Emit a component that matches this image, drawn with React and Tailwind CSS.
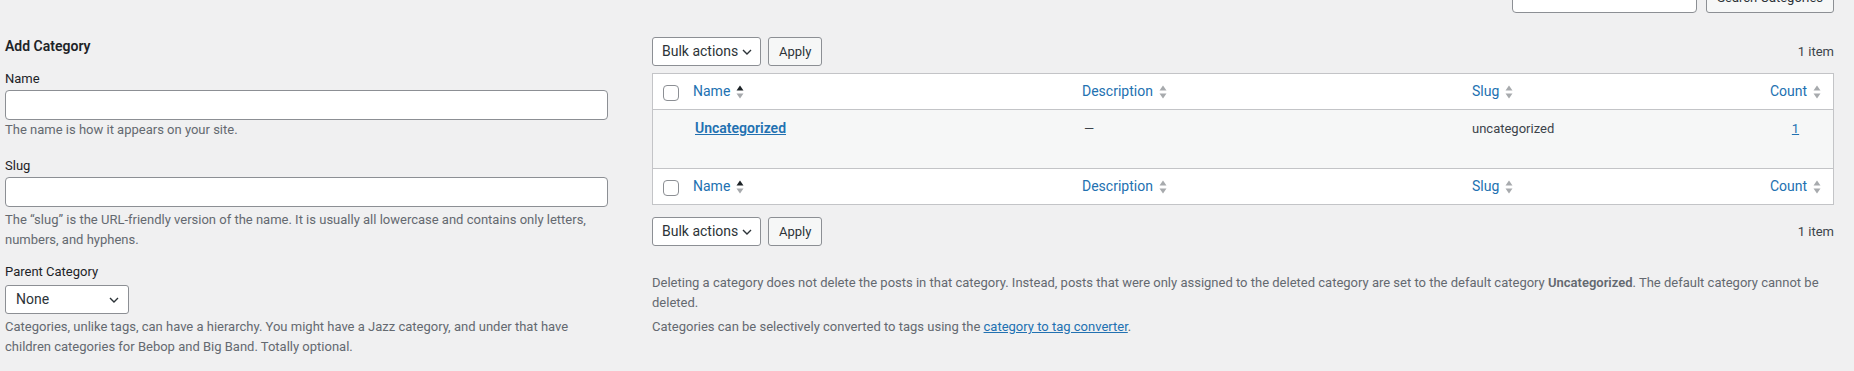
import React from "react";

const SortIcon = ({ active }) => (
  <svg width="8" height="14" viewBox="0 0 8 14" className="ml-[6px] shrink-0">
    <path d="M4 0.5 L7.5 5.5 L0.5 5.5 Z" fill={active ? "#1d2327" : "#a7aaad"} />
    <path d="M0.5 8.5 L7.5 8.5 L4 13.5 Z" fill="#a7aaad" />
  </svg>
);

const Chevron = () => (
  <svg width="10" height="6" viewBox="0 0 10 6" className="shrink-0">
    <path d="M1 1 L5 5 L9 1" fill="none" stroke="#2c3338" strokeWidth="1.4" />
  </svg>
);

const Checkbox = () => (
  <span className="block w-[16px] h-[16px] rounded-[4px] border border-[#8c8f94] bg-white" />
);

const HeaderRow = ({ top }) => (
  <div
    className={
      "grid grid-cols-[30px_389px_390px_298px_1fr] items-center bg-white " +
      (top ? "h-[36px] border-b border-[#c3c4c7]" : "h-[36px] border-t border-[#c3c4c7]")
    }
  >
    <div className="pl-[10px] pt-[3px]">
      <Checkbox />
    </div>
    <div className="pl-[10px] flex items-center text-[14px] text-[#2271b1]">
      Name <SortIcon active />
    </div>
    <div className="pl-[10px] flex items-center text-[14px] text-[#2271b1]">
      Description <SortIcon />
    </div>
    <div className="pl-[10px] flex items-center text-[14px] text-[#2271b1]">
      Slug <SortIcon />
    </div>
    <div className="flex items-center justify-center text-[14px] text-[#2271b1] pr-[2px]">
      Count <SortIcon />
    </div>
  </div>
);

const TableNav = ({ className }) => (
  <div className={"flex items-center justify-between " + className}>
    <div className="flex items-center gap-[7px]">
      <div className="flex items-center justify-between w-[109px] h-[29px] pl-[9px] pr-[8px] border border-[#8c8f94] rounded-[3px] bg-white text-[14px] text-[#2c3338]">
        <span>Bulk actions</span>
        <Chevron />
      </div>
      <button className="h-[29px] px-[10px] border border-[#8c8f94] rounded-[3px] bg-[#f6f7f7] text-[13px] text-[#2c3338]">
        Apply
      </button>
    </div>
    <span className="text-[13px] text-[#3c434a]">1 item</span>
  </div>
);

export default function App() {
  return (
    <div className="min-h-screen overflow-hidden bg-[#f0f0f1] font-[Roboto,sans-serif] text-[13px] text-[#3c434a]">
      {/* search box, scrolled mostly out of view */}
      <div className="flex justify-end gap-[9px] pr-[20px] -mt-[17px]">
        <div className="w-[185px] h-[30px] border border-[#8c8f94] rounded-[4px] bg-white" />
        <button className="h-[30px] px-[10px] border border-[#8c8f94] rounded-[3px] bg-[#f6f7f7] text-[13px] text-[#2c3338]">
          Search Categories
        </button>
      </div>

      <div className="flex pl-[5px] pr-[20px]">
        {/* Add Category form */}
        <div className="w-[603px] shrink-0">
          <h2 className="mt-[23px] h-[20px] leading-[20px] text-[14px] font-semibold text-[#1d2327]">
            Add Category
          </h2>

          <label className="block mt-[14px] leading-[18px] text-[#1d2327]">Name</label>
          <div className="mt-[2px] h-[30px] border border-[#8c8f94] rounded-[4px] bg-white" />
          <p className="leading-[20px] text-[#646970]">The name is how it appears on your site.</p>

          <label className="block mt-[17px] leading-[18px] text-[#1d2327]">Slug</label>
          <div className="mt-[2px] h-[30px] border border-[#8c8f94] rounded-[4px] bg-white" />
          <p className="mt-[3px] leading-[20px] text-[#646970]">
            The “slug” is the URL-friendly version of the name. It is usually all lowercase and contains only letters,
            numbers, and hyphens.
          </p>

          <label className="block mt-[13px] leading-[18px] text-[#1d2327]">Parent Category</label>
          <div className="mt-[4px] flex items-center justify-between w-[124px] h-[29px] pl-[10px] pr-[9px] border border-[#8c8f94] rounded-[3px] bg-white text-[14px] text-[#2c3338]">
            <span>None</span>
            <Chevron />
          </div>
          <p className="mt-[3px] leading-[20px] text-[#646970]">
            Categories, unlike tags, can have a hierarchy. You might have a Jazz category, and under that have
            <br />
            children categories for Bebop and Big Band. Totally optional.
          </p>
        </div>

        {/* Category list */}
        <div className="ml-[44px] flex-1 min-w-0">
          <TableNav className="mt-[24px]" />

          <div className="mt-[7px] border border-[#c3c4c7]">
            <HeaderRow top />
            <div className="grid grid-cols-[30px_389px_390px_298px_1fr] items-start h-[58px] bg-[#f6f7f7] pt-[8px]">
              <div />
              <div className="pl-[12px]">
                <a className="text-[14px] font-semibold text-[#2271b1] underline">Uncategorized</a>
              </div>
              <div className="pl-[12px] pt-[1px]">—</div>
              <div className="pl-[10px] pt-[1px]">uncategorized</div>
              <div className="flex justify-center pt-[1px] pr-[2px]">
                <a className="text-[#2271b1] underline">1</a>
              </div>
            </div>
            <HeaderRow />
          </div>

          <TableNav className="mt-[12px]" />

          <p className="mt-[27px] leading-[20px] text-[#646970]">
            Deleting a category does not delete the posts in that category. Instead, posts that were only assigned to the
            deleted category are set to the default category <strong className="font-semibold">Uncategorized</strong>. The
            default category cannot be deleted.
          </p>
          <p className="mt-[4px] leading-[20px] text-[#646970]">
            Categories can be selectively converted to tags using the{" "}
            <a className="text-[#2271b1] underline">category to tag converter</a>.
          </p>
        </div>
      </div>
    </div>
  );
}
